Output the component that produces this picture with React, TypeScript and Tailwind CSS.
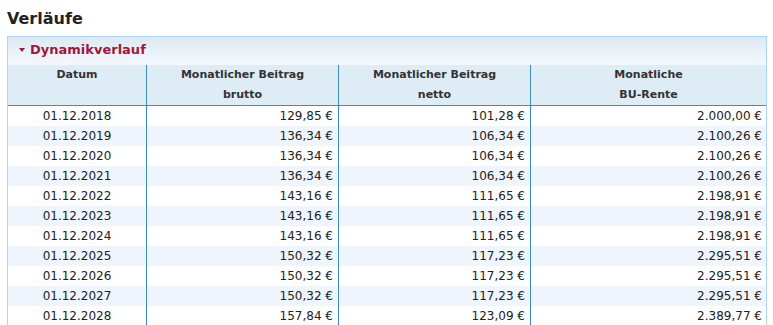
import React from 'react';

type Row = { datum: string; brutto: string; netto: string; rente: string };

const rows: Row[] = [
  { datum: '01.12.2018', brutto: '129,85 €', netto: '101,28 €', rente: '2.000,00 €' },
  { datum: '01.12.2019', brutto: '136,34 €', netto: '106,34 €', rente: '2.100,26 €' },
  { datum: '01.12.2020', brutto: '136,34 €', netto: '106,34 €', rente: '2.100,26 €' },
  { datum: '01.12.2021', brutto: '136,34 €', netto: '106,34 €', rente: '2.100,26 €' },
  { datum: '01.12.2022', brutto: '143,16 €', netto: '111,65 €', rente: '2.198,91 €' },
  { datum: '01.12.2023', brutto: '143,16 €', netto: '111,65 €', rente: '2.198,91 €' },
  { datum: '01.12.2024', brutto: '143,16 €', netto: '111,65 €', rente: '2.198,91 €' },
  { datum: '01.12.2025', brutto: '150,32 €', netto: '117,23 €', rente: '2.295,51 €' },
  { datum: '01.12.2026', brutto: '150,32 €', netto: '117,23 €', rente: '2.295,51 €' },
  { datum: '01.12.2027', brutto: '150,32 €', netto: '117,23 €', rente: '2.295,51 €' },
  { datum: '01.12.2028', brutto: '157,84 €', netto: '123,09 €', rente: '2.389,77 €' },
];

const cols = 'grid grid-cols-[139px_192px_192px_1fr]';

export default function App() {
  return (
    <div className="px-[7px] pr-[6px] text-[#222] font-['DejaVu_Sans',Verdana,sans-serif]">
      {/* Titel */}
      <h1 className="mt-[9px] text-[16px] leading-[20px] font-bold text-[#222]">Verläufe</h1>

      {/* Panel */}
      <div className="mt-[7px] border border-[#a9d6f0]">
        <div className="h-[28px] flex items-start pl-[11px] bg-gradient-to-b from-[#dde9f5] to-[#f4f8fc]">
          <span className="mt-[11px] w-0 h-0 border-l-[3.5px] border-r-[3.5px] border-t-[4px] border-l-transparent border-r-transparent border-t-[#a3173a]" />
          <span className="ml-[5px] text-[13px] leading-[26px] font-bold text-[#a3173a]">Dynamikverlauf</span>
        </div>

        {/* Kopfzeile */}
        <div className={`${cols} h-[41px] bg-[#deecf6] border-b border-[#3d8cc2] text-[11px] leading-[20px] font-bold text-[#333]`}>
          <div className="border-r border-[#3d8cc2] text-center">Datum</div>
          <div className="border-r border-[#3d8cc2] text-center">
            Monatlicher Beitrag
            <br />
            brutto
          </div>
          <div className="border-r border-[#3d8cc2] text-center">
            Monatlicher Beitrag
            <br />
            netto
          </div>
          <div className="text-center">
            Monatliche
            <br />
            BU-Rente
          </div>
        </div>

        {/* Zeilen */}
        {rows.map((r, i) => (
          <div
            key={r.datum}
            className={`${cols} h-[20px] text-[12px] leading-[20px] ${i % 2 === 1 ? 'bg-[#eef5fc]' : 'bg-white'}`}
          >
            <div className="border-r border-[#3d8cc2] text-center">{r.datum}</div>
            <div className="border-r border-[#3d8cc2] text-right pr-[5px]">{r.brutto}</div>
            <div className="border-r border-[#3d8cc2] text-right pr-[5px]">{r.netto}</div>
            <div className="text-right pr-[4px]">{r.rente}</div>
          </div>
        ))}
      </div>
    </div>
  );
}
